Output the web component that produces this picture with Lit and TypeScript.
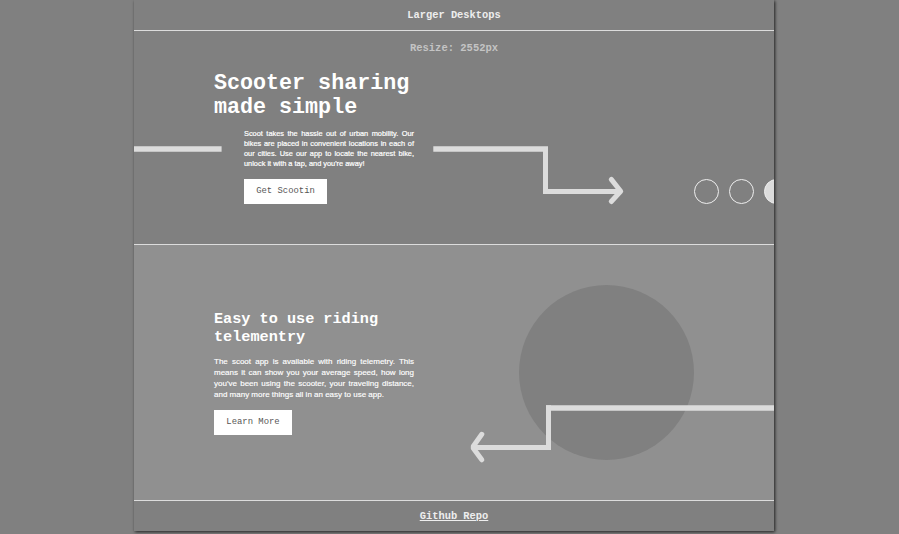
import { LitElement, html, css, svg } from "lit";
import { customElement } from "lit/decorators.js";

@customElement("app-root")
export class AppRoot extends LitElement {
  static styles = css`
    :host {
      display: block;
      height: 534px;
      overflow: hidden;
      background: #808080;
      color: #fff;
      font-family: "Liberation Sans", Arial, sans-serif;
    }
    * { box-sizing: border-box; }
    .page {
      width: 640px;
      height: 531px;
      margin-left: 134px;
      display: flex;
      flex-direction: column;
      background: #808080;
      box-shadow: 1px 1px 3px rgba(0, 0, 0, 0.75);
    }
    .bar, h1, h2, .resize, button {
      font-family: "Courier New", "Liberation Mono", monospace;
      font-weight: 700;
      margin: 0;
    }
    .bar {
      height: 31px;
      line-height: 30px;
      text-align: center;
      font-size: 10.4px;
      color: #eee;
      border-bottom: 1px solid #dcdcdc;
    }
    .foot {
      height: 31px;
      border-bottom: 0;
      border-top: 1px solid #dcdcdc;
    }
    .foot a { text-decoration: underline; }
    section { position: relative; }
    .hero { height: 213px; }
    .tele {
      height: 256px;
      flex: none;
      background: #909090;
      border-top: 1px solid #dcdcdc;
      padding: 65px 0 0 80px;
    }
    .resize {
      height: 34px;
      line-height: 34px;
      text-align: center;
      font-size: 10.5px;
      color: #c4c4c4;
    }
    .art {
      position: absolute;
      left: 0;
      bottom: 0;
      display: block;
    }
    .copy { position: relative; width: 200px; }
    .hero .copy { margin-left: 80px; padding-top: 7px; }
    h1 { font-size: 21.7px; line-height: 24px; white-space: nowrap; }
    h2 { font-size: 15.2px; line-height: 18px; white-space: nowrap; }
    p { margin: 0; text-align: justify; }
    .hero .body { margin: 9px 0 0 30px; width: 170px; }
    .hero p { font-size: 7.4px; line-height: 10px; -webkit-text-stroke: 0.2px #fff; }
    .tele p { font-size: 8px; line-height: 11px; margin-top: 10px; -webkit-text-stroke: 0.15px #fff; }
    button {
      display: block;
      width: 83px;
      height: 25px;
      margin-top: 10px;
      padding: 0;
      border: 0;
      background: #fff;
      color: #555;
      font-size: 8.9px;
      font-weight: 400;
      line-height: 25px;
      white-space: nowrap;
    }
    .tele button { width: 78px; }
    .line { fill: none; stroke: #dcdcdc; stroke-width: 5; }
    .thick { stroke-width: 5.4; }
    .head { stroke-linecap: round; stroke-linejoin: round; }
    .ring { fill: none; stroke: #eee; stroke-width: 1; }
    .dot { fill: #dcdcdc; stroke: #eee; }
    .disc { fill: #808080; }
  `;

  private heroArt() {
    return html`<svg class="art" width="640" height="213" viewBox="0 0 640 213">
      ${svg`
        <path class="line thick" d="M0 118H87.6M299.3 118H414" />
        <path class="line" d="M411.5 118V160.5H487" />
        <path class="line head" d="M477.3 148.4L486.7 160.2L477.3 170.5" />
        <circle class="ring" cx="572.5" cy="160.5" r="12" />
        <circle class="ring" cx="607.5" cy="160.5" r="12" />
        <circle class="dot" cx="642.5" cy="160.5" r="12" />
      `}
    </svg>`;
  }

  private teleArt() {
    return html`<svg class="art" width="640" height="255" viewBox="0 0 640 255">
      ${svg`
        <circle class="disc" cx="472.5" cy="127.5" r="87.5" />
        <path class="line thick" d="M412 163H640" />
        <path class="line" d="M414.5 160.2V202.5H341" />
        <path class="line head" d="M347.8 189.3L339.3 201.2V203.3L347.8 214.8" />
      `}
    </svg>`;
  }

  render() {
    return html`<div class="page">
      <header class="bar">Larger Desktops</header>
      <section class="hero">
        ${this.heroArt()}
        <div class="resize">Resize: 2552px</div>
        <div class="copy">
          <h1>Scooter sharing<br />made simple</h1>
          <div class="body">
            <p>Scoot takes the hassle out of urban mobility. Our bikes are placed in convenient locations in each of our cities. Use our app to locate the nearest bike, unlock it with a tap, and you're away!</p>
            <button>Get Scootin</button>
          </div>
        </div>
      </section>
      <section class="tele">
        ${this.teleArt()}
        <div class="copy">
          <h2>Easy to use riding<br />telementry</h2>
          <p>The scoot app is available with riding telemetry. This means it can show you your average speed, how long you've been using the scooter, your traveling distance, and many more things all in an easy to use app.</p>
          <button>Learn More</button>
        </div>
      </section>
      <footer class="bar foot"><a>Github Repo</a></footer>
    </div>`;
  }
}
